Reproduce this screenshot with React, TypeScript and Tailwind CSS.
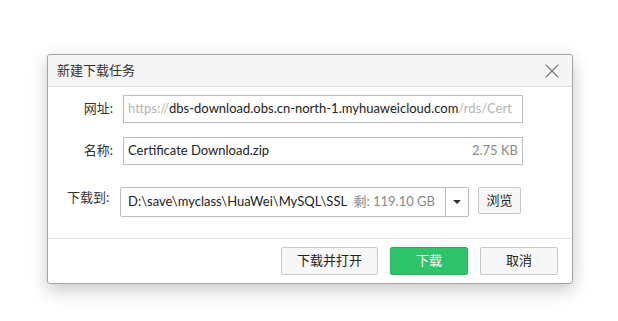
import { X } from "lucide-react";

const font = { fontFamily: 'Lato, "Noto Sans CJK SC", sans-serif' };

export default function App() {
  return (
    <div className="h-[321px] w-[618px] overflow-hidden bg-white pl-[47px] pt-[54px]" style={font}>
      <div className="flex h-[230px] w-[526px] flex-col rounded-[3px] border border-[#a3a3a3] bg-white shadow-[0_6px_18px_rgba(0,0,0,0.22)]">
        <div className="flex h-[32px] items-center justify-between rounded-t-[3px] border-b border-[#dedede] bg-[#f5f5f5] pl-[9px] pr-[8px]">
          <span className="text-[13px] text-[#333]">新建下载任务</span>
          <X className="h-[24px] w-[24px] text-[#777]" strokeWidth={1.1} />
        </div>

        <div className="flex flex-1 flex-col pt-[8px]">
          <div className="flex items-center">
            <span className="w-[67px] pr-[2px] text-right text-[13px] text-[#333]">网址:</span>
            <div className="ml-[8px] flex h-[28px] w-[400px] items-center overflow-hidden whitespace-nowrap border border-[#bdbdbd] px-[4px] text-[13px]">
              <span className="text-[#b4b4b4]">https://</span>
              <span className="text-[#222]">dbs-download.obs.cn-north-1.myhuaweicloud.com</span>
              <span className="text-[#b4b4b4]">/rds/Cert</span>
            </div>
          </div>

          <div className="mt-[14px] flex items-center">
            <span className="w-[67px] pr-[2px] text-right text-[13px] text-[#333]">名称:</span>
            <div className="ml-[8px] flex h-[28px] w-[400px] items-center justify-between border border-[#bdbdbd] px-[4px] text-[13px]">
              <span className="text-[#222]">Certificate Download.zip</span>
              <span className="text-[#888]">2.75 KB</span>
            </div>
          </div>

          <div className="mt-[22px] flex items-start">
            <span className="ml-[19px] w-[53px] pt-[1px] text-[13px] text-[#333]">下载到:</span>
            <div className="flex h-[30px] w-[349px] items-center rounded-[2px] border border-[#bdbdbd] text-[13px]">
              <div className="flex flex-1 items-center justify-between pl-[7px] pr-[10px]">
                <span className="text-[#222]">D:\save\myclass\HuaWei\MySQL\SSL</span>
                <span className="text-[#888]">剩: 119.10 GB</span>
              </div>
              <div className="flex h-full w-[23px] items-center justify-center border-l border-[#bdbdbd]">
                <span className="h-0 w-0 border-x-[4px] border-t-[4px] border-x-transparent border-t-[#333]" />
              </div>
            </div>
            <button className="ml-[9px] h-[27px] w-[43px] rounded-[2px] border border-[#c8c8c8] bg-[#f7f7f7] text-[13px] text-[#222]">
              浏览
            </button>
          </div>
        </div>

        <div className="flex h-[45px] items-center justify-end gap-[12px] border-t border-[#e4e4e4] pr-[14px]">
          <button className="h-[28px] w-[97px] rounded-[2px] border border-[#c8c8c8] bg-[#f7f7f7] text-[13px] text-[#222]">
            下载并打开
          </button>
          <button className="h-[28px] w-[78px] rounded-[2px] border border-[#25b15f] bg-[#2ec46c] text-[13px] text-white">
            下载
          </button>
          <button className="h-[28px] w-[78px] rounded-[2px] border border-[#c8c8c8] bg-[#f7f7f7] text-[13px] text-[#222]">
            取消
          </button>
        </div>
      </div>
    </div>
  );
}
